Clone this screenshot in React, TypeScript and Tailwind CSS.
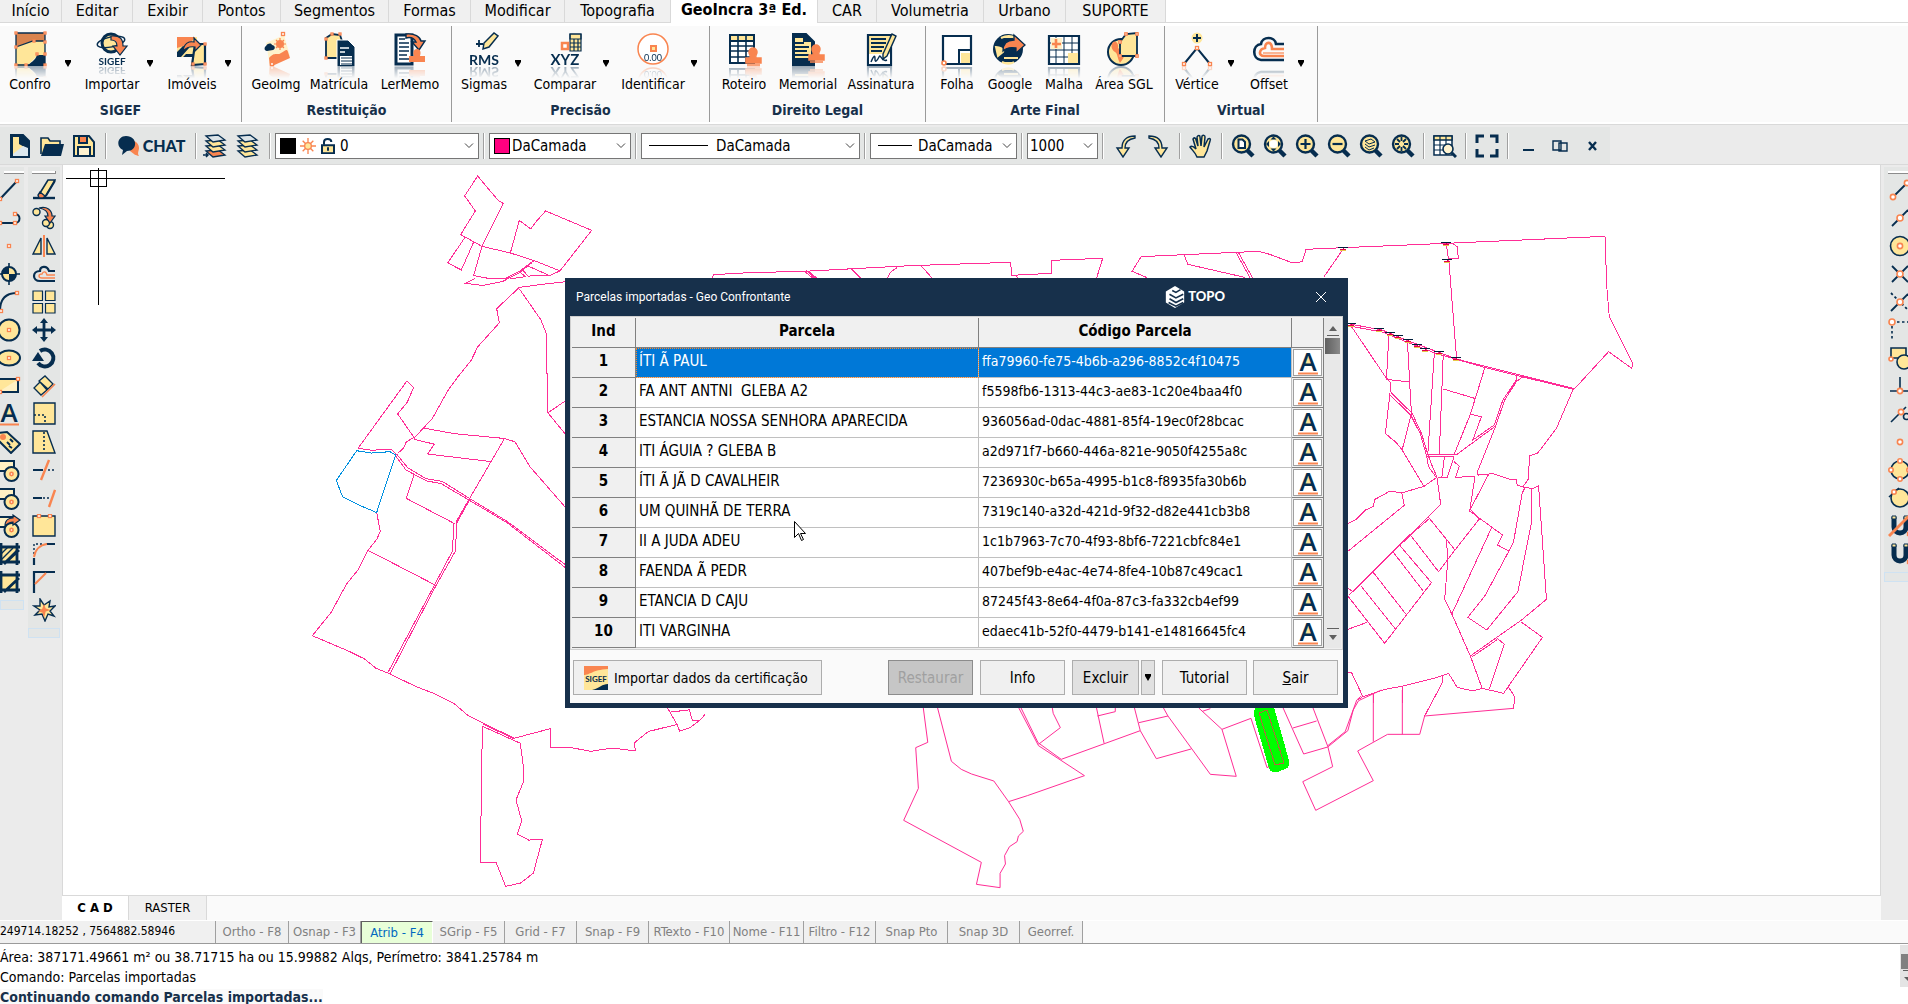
import { ReactNode } from "react";
import { clsx } from "clsx";

const NAVY = "#062d4f";
const SAND = "#ffe699";
const CORAL = "#f98550";

/**
 * ICON PARTS
 */
function Grip({ x, y, s = 3 }: { x: number; y: number; s?: number }) {
    return <rect x={x - s / 2} y={y - s / 2} width={s} height={s} fill="#fff" stroke={CORAL} strokeWidth={1.3} />
}

function Ring({ x, y, r = 2.6 }: { x: number; y: number; r?: number }) {
    return <circle cx={x} cy={y} r={r} fill="#fff" stroke={CORAL} strokeWidth={1.6} />
}

function Stamp() {
    return <path d="M24 13a4 4 0 0 0-4 4c0 3 2 3 1 6h-4v5h15v-5h-5c-1-3 1-3 1-6a4 4 0 0 0-4-4ZM18 30h13" fill={CORAL} stroke={CORAL} strokeWidth={1.5} />
}

function Letter({ x, y, size, children }: { x: number; y: number; size: number; children: string }) {
    return (
        <text x={x} y={y} fontSize={size} textAnchor="middle" fontWeight={700} fill={NAVY} stroke="none" fontFamily="Lato, sans-serif">
            {children}
        </text>
    )
}

function Icon({ children, box = 24, className }: { children: ReactNode; box?: number; className?: string }) {
    return (
        <svg viewBox={`0 0 ${box} ${box}`} fill="none" stroke={NAVY} strokeWidth={2} className={clsx('shrink-0', className)} aria-hidden="true">
            {children}
        </svg>
    )
}

/**
 * RIBBON ICONS, 36 x 36
 */
const ribbonIcons: Record<string, ReactNode> = {
    Confro: (
        <>
            <path d="M4 3h29v8L21 11 4 17Z" fill="#d9844f" stroke="none" />
            <path d="M4 17 21 11h12v15h-8L14 37H4Z" fill={SAND} stroke="none" />
            <path d="M33 25h-8c-2 6-6 7-10 11h18Z" fill={NAVY} stroke="none" />
            <path d="M4 3v32h29V3ZM4 17l17-6h12" strokeWidth={1.3} />
            <Grip x={4} y={3} s={2} /><Grip x={33} y={3} s={2} /><Grip x={4} y={17} s={2} /><Grip x={22} y={11} s={2} /><Grip x={33} y={12} s={2} />
            <Grip x={4} y={35} s={2} /><Grip x={33} y={35} s={2} /><Grip x={14} y={35} s={2} /><Grip x={25} y={24} s={2} /><Grip x={33} y={24} s={2} />
        </>
    ),
    Importar: (
        <>
            <circle cx={17} cy={13} r={9} fill={SAND} strokeWidth={3} />
            <ellipse cx={17} cy={12} rx={14} ry={5} transform="rotate(-12 17 12)" strokeWidth={1.5} />
            <path d="M17 6c9-1 12 3 12 10h4l-7 9-7-9h4c0-4-2-6-6-6Z" fill={CORAL} strokeWidth={1.2} />
            <Letter x={18} y={35} size={10}>SIGEF</Letter>
        </>
    ),
    "Imóveis": (
        <>
            <path d="M3 7h20v20H3Z" fill={SAND} stroke="none" />
            <path d="M3 7h18l-5 7-13 4Z" fill={CORAL} stroke="none" />
            <path d="M12 24h9v3H9ZM3 22l6-6 6 2-8 9H3Z" fill={NAVY} stroke="none" />
            <path d="M21 14h10v20l-13 1Z" fill={SAND} strokeWidth={2.2} />
            <path d="M9 21c1-8 6-10 11-9V8l7 7-6 6v-4c-5-1-8 0-12 4Z" fill={CORAL} strokeWidth={1.2} />
            <Grip x={31} y={14} s={2} /><Grip x={31} y={34} s={2} /><Grip x={19} y={34} s={2} />
        </>
    ),
    GeoImg: (
        <>
            <path d="M8 13 26 5l6 21-20 10Z" fill="#fff2cb" stroke="none" />
            <path d="M11 28c6-7 8-2 12-5 4-2 6-5 7-1l2 6-20 9Z" fill={CORAL} stroke="none" />
            <path d="M8 16c2-3 5-3 6-1 3 0 4 4 1 5l-6 1c-3 0-3-4-1-5Z" fill={NAVY} stroke="none" />
            <circle cx={22} cy={14} r={4} fill={CORAL} stroke="none" />
            <path d="M22 8v12M16 14h12M18 10l8 8M26 10l-8 8" stroke={CORAL} strokeWidth={1.2} />
            <Grip x={25} y={4} /><Grip x={14} y={34} />
        </>
    ),
    "Matrícula": (
        <>
            <path d="M5 28V8l6-4 8 1 2 6v17Z" fill={SAND} strokeWidth={1.8} />
            <Grip x={5} y={28} s={2} /><Grip x={5} y={9} s={2} /><Grip x={11} y={4} s={2} /><Grip x={19} y={4} s={2} />
            <path d="M16 10h11l7 7v20H16Z" fill={NAVY} stroke="#fff" strokeWidth={1} />
            <path d="M19 18h9M19 22h5" stroke="#fff" strokeWidth={1.5} />
            <path d="M19 26h12v9H19Z" fill="#fff" stroke="none" />
            <path d="M20 28h11M20 31h11M20 34h11" stroke={NAVY} strokeWidth={1} />
        </>
    ),
    LerMemo: (
        <>
            <path d="M4 5h16v29H4Z" fill="#fff" strokeWidth={3} />
            <path d="M7 9h6M7 13h10M7 17h10M7 21h10M7 25h8M7 29h10" strokeWidth={1.6} />
            <path d="M14 4c9-1 14 3 15 7h4l-6 9-7-8h4c-2-4-6-5-10-4Z" fill={CORAL} strokeWidth={1.4} />
            <path d="M25 19c4 0 4 4 3 7h5v6H17v-6h5c-1-3-1-7 3-7Z" fill={CORAL} stroke="none" />
        </>
    ),
    Sigmas: (
        <>
            <path d="m17 19 1-6L28 3l4 3-9 11Z" fill={SAND} strokeWidth={1.5} />
            <path d="M10 14h7M13 10v7" strokeWidth={1.8} />
            <Letter x={18} y={35} size={14}>RMS</Letter>
        </>
    ),
    Comparar: (
        <>
            <path d="M23 4h11v17H23Z" fill={SAND} stroke={NAVY} strokeWidth={1.2} />
            <path d="M23 4h11v5H23ZM23 13h11M23 17h11M27 9v12M31 9v12" strokeWidth={1.2} />
            <rect x={15} y={13} width={6} height={6} fill="#fff" stroke={CORAL} strokeWidth={2.5} />
            <Letter x={18} y={35} size={15}>XYZ</Letter>
        </>
    ),
    Identificar: (
        <>
            <circle cx={18} cy={19} r={15} stroke={CORAL} strokeWidth={1.5} fill="#fff" />
            <rect x={16} y={16} width={5} height={5} fill={SAND} stroke={CORAL} />
            <text x={18} y={31} fontSize={9} textAnchor="middle" fill={NAVY} stroke="none" fontFamily="Lato, sans-serif">0.00</text>
        </>
    ),
    Roteiro: (
        <>
            <path d="M4 5h24v28H4Z" fill="#fff" />
            <path d="M4 5h24v6H4Z" fill={SAND} />
            <path d="M4 16h24M4 21h24M4 27h24M12 5v28M20 5v28" strokeWidth={1.6} />
            <g transform="translate(3 5)"><Stamp /></g>
        </>
    ),
    Memorial: (
        <>
            <path d="M3 4h13l8 8v23H3Z" fill={NAVY} />
            <path d="M5 8h8v4h8v18H5Z" fill={SAND} stroke="none" />
            <path d="M4 13h10M4 17h15M4 21h13M4 25h15M4 29h15" strokeWidth={2} />
            <g transform="translate(2 2)"><Stamp /></g>
        </>
    ),
    Assinatura: (
        <>
            <path d="M5 5h23v30H5Z" fill={SAND} strokeWidth={2.2} />
            <path d="M6 24h21v10H6Z" fill="#fff" stroke="none" />
            <path d="M8 9h15M8 13h15M8 17h13M8 21h11" strokeWidth={1.8} />
            <path d="M8 32c3-7 4-7 4-3s2 2 4-2 2 6 8 3" strokeWidth={1.4} />
            <path d="m20 24 9-20 4 2-9 20-4 3Z" fill={SAND} strokeWidth={1.4} />
        </>
    ),
    Folha: (
        <>
            <path d="M4 6h28v28H4Z" fill="#fff" strokeWidth={2.2} />
            <path d="M20 20h12v14H20Z" fill="#fff" />
            <path d="M22 23h9v10h-9Z" fill={SAND} stroke="none" />
            <Ring x={5} y={33} r={2} />
        </>
    ),
    Google: (
        <>
            <circle cx={16} cy={19} r={15} fill={NAVY} stroke="none" />
            <path d="M4 17c4 0 8 2 7 5l-5 4ZM12 28h14M9 8c4-2 10-3 14 0M10 32c4 2 9 2 12 0" stroke={SAND} fill={SAND} strokeWidth={2} />
            <path d="M11 21c0-9 5-11 11-11V5l11 10-9 8v-5c-5-1-9-1-13 3Z" fill={CORAL} strokeWidth={1.3} />
        </>
    ),
    Malha: (
        <>
            <path d="M3 6h30v28H3Z" fill="#fff" strokeWidth={2.2} />
            <path d="M3 13h30M3 20h30M3 27h30M10 6v28M18 6v28M26 6v28" strokeWidth={1} />
            <path d="M5 8h11v11H5Z" fill="#fff2cb" stroke="none" />
            <path d="M22 23h10v10H22Z" fill={SAND} stroke="none" />
            <path d="M10 9v9M6 14h9" stroke={CORAL} strokeWidth={2.6} />
        </>
    ),
    "Área SGL": (
        <>
            <circle cx={15} cy={22} r={13} fill={SAND} strokeWidth={2} />
            <path d="M7 12c3-2 6 2 5 6l6 5c1 4-2 7-4 10-3-5-2-9-5-11s-5-6-2-10Z" fill={CORAL} stroke="none" />
            <path d="M14 12 20 4l11-1v23H14Z" fill={SAND} strokeWidth={1.8} />
            <Grip x={14} y={12} s={2.4} /><Grip x={20} y={4} s={2.4} /><Grip x={31} y={4} s={2.4} /><Grip x={31} y={26} s={2.4} /><Grip x={14} y={26} s={2.4} />
        </>
    ),
    "Vértice": (
        <>
            <circle cx={18} cy={8} r={5.5} fill={SAND} stroke="none" />
            <path d="M18 4v8M14 8h8" strokeWidth={2} />
            <path d="m5 34 13-16 13 16" strokeWidth={2} />
            <Grip x={18} y={18} /><Grip x={5} y={34} /><Grip x={31} y={34} />
        </>
    ),
    Offset: (
        <>
            <path d="M33 14H25c-1-8-14-8-15 0C1 15 1 29 10 30h23" strokeWidth={2.6} />
            <path d="M33 19H21c0-8-7-8-7-1-6 1-7 8-1 8h20" stroke={CORAL} strokeWidth={2.6} />
            <path d="M33 23H12" stroke={CORAL} strokeWidth={1.2} />
        </>
    ),
}

/**
 * DRAWING TOOL ICONS, 24 x 24
 */
const block = (
    <>
        <path d="M2 3h15v10H2Z" fill="#fff1c4" />
        <circle cx={14.5} cy={16} r={7} fill={SAND} />
        <Ring x={14.5} y={16} r={1.6} />
    </>
)
const frame = <path d="M1 5h22M1 20h22M4 1v22M20 1v22M7 22 22 8" strokeWidth={2.8} />

const drawIcons: Record<string, ReactNode> = {
    Linha: <><path d="M4 20 20 3" /><Grip x={3} y={21} /><Grip x={20} y={3} /></>,
    Polilinha: <><path d="M1 17h17c6 0 6-9 0-9" /><Grip x={3} y={17} /><Grip x={18} y={17} /><Grip x={18} y={8} /></>,
    Ponto: <Grip x={12} y={12} />,
    Base: <><path d="M12 1v22M1 12h22" strokeWidth={1.6} /><circle cx={12} cy={12} r={7} fill={SAND} /><path d="M12 12V5a7 7 0 0 0-7 7ZM12 12v7a7 7 0 0 0 7-7Z" fill={NAVY} stroke="none" /></>,
    Arco: <><path d="M3 21C3 10 8 3 20 3" /><Grip x={20} y={3} /><Grip x={4} y={21} /></>,
    "Círculo": <><circle cx={12} cy={12} r={10.5} fill={SAND} /><Grip x={12} y={12} /></>,
    Elipse: <><ellipse cx={12} cy={12} rx={11} ry={7.5} fill={SAND} /><Grip x={12} y={12} /></>,
    "Retângulo": <><path d="M2 5h19v13H2Z" fill="#fff1c4" /><path d="M3 6h17L3 17Z" fill={SAND} stroke="none" /><Grip x={21} y={5} /><Grip x={3} y={18} /></>,
    Texto: (
        <>
            <path d="M12 4 8 15h8Z" fill={SAND} stroke="none" />
            <text x={12} y={20} fontSize={26} textAnchor="middle" fontWeight={600} fill={NAVY} stroke="none" fontFamily="Open Sans, sans-serif">A</text>
            <path d="M2 22.5h20" stroke={CORAL} />
        </>
    ),
    Etiqueta: <><path d="m1 3 9-1 13 12-9 9L1 10Z" fill={SAND} /><circle cx={6} cy={7} r={2} fill={CORAL} stroke={CORAL} /><path d="m10 12 3 3M13 9l3 3M12 16l3 2" /></>,
    Bloco: block,
    "Novo bloco": block,
    "Inserir bloco": <>{block}<path d="M8 12C8 5 13 4 16 4V1l7 5-7 5V8c-3 0-5 1-8 4Z" fill={CORAL} strokeWidth={1.2} /></>,
    Hachura: <><path d="M4 5h16v15H4Z" fill={SAND} stroke="none" /><path d="m4 12 7-7M4 18 16 6M8 20 20 8" strokeWidth={1.4} />{frame}</>,
    "Área": <><path d="M4 5h16v15H4Z" fill={SAND} stroke="none" />{frame}</>,
}

const editIcons: Record<string, ReactNode> = {
    Apagar: <><path d="M1 20h22" strokeWidth={2.4} /><path d="m8 15 8-13h7L13 19H7Z" fill={SAND} strokeWidth={1.6} /><path d="m14 18 9-15" strokeWidth={1.6} /><path d="m8 14 5 4-2 2H7l-1-3Z" fill={CORAL} strokeWidth={1.4} /></>,
    Copiar: <><circle cx={4.5} cy={6} r={3.5} fill={SAND} strokeWidth={1.4} /><circle cx={18} cy={19} r={3.5} fill={SAND} strokeWidth={1.4} /><circle cx={14} cy={17} r={3.5} fill={SAND} strokeWidth={1.4} /><path d="M7 2c8-2 13 2 13 8h3l-5 7-5-7h3c0-4-3-7-9-8Z" fill={CORAL} strokeWidth={1.2} /></>,
    Espelhar: <><path d="M9 4v16H1ZM15 4v16h8Z" fill={SAND} strokeWidth={1.4} /><path d="M12 1v22" stroke={CORAL} strokeWidth={2} /></>,
    Paralela: <><path d="M23 9h-6c-2-6-9-5-9 0-8 0-8 10 0 10h15" strokeWidth={2.2} /><path d="M23 13h-8c-1-4-4-4-5-1-4 0-4 4 0 4h13" stroke={CORAL} strokeWidth={1.4} /></>,
    Matriz: <path d="M1 1h9.5v9.5H1ZM13.5 1H23v9.5h-9.5ZM1 13.5h9.5V23H1ZM13.5 13.5H23V23h-9.5Z" fill={SAND} strokeWidth={1.2} />,
    Mover: <><path d="M12 3v18M3 12h18" strokeWidth={2.8} /><path d="m12 0 4 5H8ZM12 24l4-5H8ZM0 12l5-4v8ZM24 12l-5-4v8Z" fill={NAVY} stroke="none" /></>,
    Rotacionar: <><path d="M8 5a8.500 8.500 0 1 1-2 12" strokeWidth={4} /><path d="m6 6 6 9H0Z" fill={NAVY} stroke="none" /></>,
    Alinhar: <><path d="m7 7 6-5 8 8-5 5ZM2 14l6-6 7 8-6 5Z" fill={SAND} strokeWidth={1.3} /><path d="M10 23 23 10" stroke={CORAL} strokeWidth={1.6} /></>,
    Escala: <><path d="M2 1h21v21H2Z" fill={SAND} strokeWidth={1.4} /><path d="M2 13h11v9" strokeWidth={1.6} strokeDasharray="2 2" /></>,
    Esticar: <><path d="M1 1h14l8 22H1Z" fill={SAND} strokeWidth={1.4} /><path d="M12 2v20" strokeWidth={1.6} strokeDasharray="2 2" /></>,
    Cortar: <><path d="M1 12h10" /><path d="M12 12h12" strokeDasharray="2 2" strokeWidth={1.4} /><path d="m9 22 8-20" stroke={CORAL} strokeWidth={2.4} /></>,
    Estender: <><path d="M1 12h9" /><path d="M11 12h7" strokeDasharray="2 2" strokeWidth={1.4} /><path d="m17 21 6-17" stroke={CORAL} strokeWidth={2.4} /></>,
    Quebrar: <><path d="M1 2h22v20H1Z" fill={SAND} strokeWidth={1.4} /><Grip x={7} y={2} /><Grip x={18} y={2} /></>,
    Concordar: <><path d="M2 23v-7M23 2h-9" strokeWidth={2.2} /><path d="M2 12V2h9" strokeWidth={1.4} strokeDasharray="2 2" /><path d="M2 15C3 8 8 3 15 2" stroke={CORAL} /></>,
    Chanfrar: <><path d="M2 23V2h21" strokeWidth={2.2} /><path d="M3 14 14 3" stroke={CORAL} /></>,
    Explodir: <><path d="m8 1 4 6 6-4-1 6 6-1-5 5 4 5-6-2-3 7-3-7-7 1 5-5-6-4h6Z" fill={SAND} strokeWidth={1.4} /><path d="m12 8 1 3 3 1-3 1-1 4-1-3-3-1 3-2Z" fill={CORAL} stroke={CORAL} strokeWidth={1.5} /></>,
}

const magnet = <><path d="M6 3v10a6 6 0 0 0 12 0V3" strokeWidth={5} /><path d="M4 2h4v3H4ZM16 2h4v3h-4Z" fill={SAND} strokeWidth={1} /><Grip x={21} y={20} /></>
const snapIcons: Record<string, ReactNode> = {
    Extremidade: <><path d="M5 19 19 5" strokeWidth={1.8} /><Ring x={5} y={19} /><Ring x={19} y={5} /></>,
    Meio: <><path d="M4 20 20 4" strokeWidth={1.8} /><Ring x={12} y={12} r={3} /></>,
    Centro: <><circle cx={12} cy={12} r={9.5} fill={SAND} strokeWidth={1.6} /><Ring x={12} y={12} /></>,
    "Interseção": <><path d="m4 4 16 16M4 20 20 4" strokeWidth={1.8} /><Ring x={12} y={12} r={3} /></>,
    Aparente: <><path d="M3 21 20 4" strokeWidth={1.8} /><path d="m3 3 18 18" strokeDasharray="2.5 2.5" strokeWidth={1.8} /><Ring x={12} y={12} r={3} /></>,
    "Extensão": <><path d="M4 8v15M9 4h14" strokeDasharray="2.5 2.5" strokeWidth={1.6} /><Ring x={4} y={4} r={3} /></>,
    "Inserção": <><path d="M3 2h15v10H3Z" fill={SAND} strokeWidth={1.6} /><circle cx={16} cy={16} r={7} fill={SAND} strokeWidth={1.6} /><Ring x={3} y={13} r={2} /></>,
    Perpendicular: <><path d="M2 17h22M12 3v14" strokeWidth={1.6} /><Ring x={12} y={17} /></>,
    Tangente: <><path d="M3 20 18 5" strokeWidth={1.6} /><circle cx={18.5} cy={14.5} r={3} strokeWidth={1.6} /><Ring x={13} y={10} /></>,
    "Nó": <Ring x={12} y={12} />,
    Quadrante: <><circle cx={12} cy={12} r={9} fill={SAND} strokeWidth={1.6} /><Ring x={12} y={3} r={2.2} /><Ring x={12} y={21} r={2.2} /><Ring x={3} y={12} r={2.2} /><Ring x={21} y={12} r={2.2} /></>,
    "Próximo": <><circle cx={12} cy={12} r={9} fill={SAND} strokeWidth={1.6} /><path d="m1 11 10-9" strokeWidth={1.6} /><Ring x={6} y={6} r={2.2} /></>,
    "Desligar snap": <>{magnet}<path d="M1 22 22 1" stroke={CORAL} strokeWidth={3} /></>,
    "Ligar snap": magnet,
}

/**
 * RIBBON
 */
const menuTabs = [
    { label: "Início", width: "w-[62px]" },
    { label: "Editar", width: "w-[71px]" },
    { label: "Exibir", width: "w-[70px]" },
    { label: "Pontos", width: "w-[78px]" },
    { label: "Segmentos", width: "w-[108px]" },
    { label: "Formas", width: "w-[82px]" },
    { label: "Modificar", width: "w-[94px]" },
    { label: "Topografia", width: "w-[106px]" },
    { label: "GeoIncra 3ª Ed.", width: "w-[147px]", active: true },
    { label: "CAR", width: "w-[59px]" },
    { label: "Volumetria", width: "w-[107px]" },
    { label: "Urbano", width: "w-[82px]" },
    { label: "SUPORTE", width: "w-[100px]" },
]

type RibbonItem = { label: string; width: string; menu?: boolean }

const ribbonGroups: { title: string; width: string; items: RibbonItem[] }[] = [
    {
        title: "SIGEF", width: "w-[241px] gap-1.5",
        items: [
            { label: "Confro", width: "w-[60px]", menu: true },
            { label: "Importar", width: "w-[60px]", menu: true },
            { label: "Imóveis", width: "w-[56px]", menu: true },
        ],
    },
    {
        title: "Restituição", width: "w-[209px] pl-1",
        items: [
            { label: "GeoImg", width: "w-[60px]" },
            { label: "Matrícula", width: "w-[66px]" },
            { label: "LerMemo", width: "w-[76px]" },
        ],
    },
    {
        title: "Precisão", width: "w-[257px] gap-1.5 pl-1.5",
        items: [
            { label: "Sigmas", width: "w-[52px]", menu: true },
            { label: "Comparar", width: "w-[66px]", menu: true },
            { label: "Identificar", width: "w-[66px]", menu: true },
        ],
    },
    {
        title: "Direito Legal", width: "w-[215px] pl-1",
        items: [
            { label: "Roteiro", width: "w-[60px]" },
            { label: "Memorial", width: "w-[68px]" },
            { label: "Assinatura", width: "w-[78px]" },
        ],
    },
    {
        title: "Arte Final", width: "w-[238px] pl-1",
        items: [
            { label: "Folha", width: "w-[54px]" },
            { label: "Google", width: "w-[52px]" },
            { label: "Malha", width: "w-[56px]" },
            { label: "Área SGL", width: "w-[64px]" },
        ],
    },
    {
        title: "Virtual", width: "w-[152px] gap-1.5 pl-1.5",
        items: [
            { label: "Vértice", width: "w-[52px]", menu: true },
            { label: "Offset", width: "w-[48px]", menu: true },
        ],
    },
]

function MenuTabs() {
    return (
        <nav className="flex h-[23px] border-b border-[#d9d9d9]">
            {menuTabs.map(({ label, width, active }) => (
                <button
                    key={label}
                    className={clsx(
                        'shrink-0 border-r border-[#d9d9d9] text-base whitespace-nowrap',
                        width,
                        active ? '-mb-px h-[23px] bg-white pb-1 leading-4 font-bold' : 'h-[22px] bg-[#f0f0f0] leading-5'
                    )}
                >
                    {label}
                </button>
            ))}
        </nav>
    )
}

function Ribbon() {
    return (
        <section className="mt-[3px] mb-[2px] flex h-[96px] bg-[#fafafa]">
            {ribbonGroups.map(({ title, width, items }) => (
                <div key={title} className="flex shrink-0 flex-col border-r border-[#9a9a9a]">
                    <div className={clsx('flex h-[68px]', width)}>
                        {items.map((item) => (
                            <div key={item.label} className="flex shrink-0">
                                <button className={clsx('flex flex-col items-center pt-1', item.width)}>
                                    <Icon box={36} className="size-9 [-webkit-box-reflect:below_0_linear-gradient(transparent_66%,rgb(0_0_0/0.4))]">
                                        {ribbonIcons[item.label]}
                                    </Icon>
                                    <span className="mt-2.5 text-sm leading-4 whitespace-nowrap">{item.label}</span>
                                </button>
                                {item.menu && (
                                    <button className="flex w-4 justify-center pt-[34px]" aria-label={`Opções de ${item.label}`}>
                                        <svg viewBox="0 0 6 7" className="h-[7px] w-1.5"><path d="M0 0h6v2L3 7 0 2Z" /></svg>
                                    </button>
                                )}
                            </div>
                        ))}
                    </div>
                    <h2 className="pt-2 text-center text-sm leading-4 font-bold text-[#17304b]">{title}</h2>
                </div>
            ))}
        </section>
    )
}

/**
 * TOOLBAR
 */
function Separator() {
    return <span className="h-[26px] w-0.5 shrink-0 border-l border-[#a0a0a0] bg-white" />
}

function Combo({ label, value, children, className }: { label: string; value: string; children?: ReactNode; className: string }) {
    return (
        <label className={clsx('flex h-[26px] shrink-0 items-center border border-[#767676] bg-white', className)}>
            {children}
            <select aria-label={label} className="min-w-0 flex-1 appearance-none text-[15px] leading-5 outline-none">
                <option>{value}</option>
            </select>
            <svg viewBox="0 0 10 6" className="mr-1 h-1.5 w-2.5 shrink-0" fill="none" stroke="#444"><path d="m1 .5 4 4 4-4" /></svg>
        </label>
    )
}

function Tool({ label, children, className }: { label: string; children: ReactNode; className?: string }) {
    return (
        <button aria-label={label} className={clsx('shrink-0', className)}>
            <Icon className="size-6">{children}</Icon>
        </button>
    )
}

const lens = <><path d="m15 15 7 7" strokeWidth={4.5} /><circle cx={10.5} cy={10} r={8.5} fill={SAND} strokeWidth={2.4} /></>
const zoomIcons: Record<string, ReactNode> = {
    "Zoom página": <>{lens}<path d="M7.5 5.500h4l2.500 2.500v6H7.500Z" fill="#fff" /></>,
    "Zoom extensão": <>{lens}<circle cx={10.5} cy={10} r={4} fill="#fff" stroke="none" /><path d="m10.5 2.500 3 3h-6ZM10.500 17.500l3-3h-6ZM3 10l3-3v6ZM18 10l-3-3v6Z" fill={NAVY} stroke="none" /></>,
    "Mais zoom": <>{lens}<path d="M5.5 10h10M10.500 5v10" strokeWidth={2.2} /></>,
    "Menos zoom": <>{lens}<path d="M5.5 10h10" strokeWidth={2.2} /></>,
    "Zoom camada": <>{lens}<path d="m6 7 6-2 4 3-6 2ZM6 10l4 3 6-2M6 13l4 3 5-2" strokeWidth={1} /></>,
    "Zoom centro": <>{lens}<path d="m6 5 3 3M15 5l-3 3M6 15l3-3M15 15l-3-3M10.5 3v4M10.500 13v4M4 10h4M13 10h4" strokeWidth={1.8} /></>,
}

function Layers({ accent }: { accent?: boolean }) {
    return (
        <>
            {[16, 11, 6, 1].map((y) => (
                <path key={y} d={`M3 ${y + 1}l12-1 7 5-12 2Z`} fill={accent && y === 16 ? CORAL : y === 1 ? '#dce4e8' : SAND} strokeWidth={1.3} />
            ))}
            {accent && <path d="M0 21h5M3 19l2 2-2 2" strokeWidth={1.5} />}
        </>
    )
}

function Toolbar() {
    return (
        <section className="border-y border-[#d9d9d9] bg-[#ebebeb] pt-0.5">
            <div className="flex h-[37px] w-[1610px] items-center bg-[#e4e6e5]">
                <div className="flex w-[105px] shrink-0 items-center gap-2 pl-2">
                    <Tool label="Novo"><path d="M3 1h12l6 6v16H3Z" fill={NAVY} /><path d="M5 3h6v7l9 5v7H5Z" fill={SAND} stroke="none" /><path d="m5 20 10-8 5 2v8H5Z" fill="#dbe8ef" stroke="none" /></Tool>
                    <Tool label="Abrir"><path d="M1 20V4h7l2 3h10v4" fill={SAND} strokeWidth={1.6} /><path d="m5 10h19l-3 12H1Z" fill={NAVY} stroke="none" /></Tool>
                    <Tool label="Salvar"><path d="M2 2h15l5 6v14H2Z" fill={SAND} /><path d="M7 2h8v7H7Z" fill={CORAL} /><path d="M6 13h12v9H6Z" fill="#fff3d0" /></Tool>
                </div>
                <Separator />
                <button className="flex w-[88px] shrink-0 items-center justify-center font-[Lato,sans-serif] text-base font-black text-[#062d4f]">
                    <Icon className="mr-0.5 size-6">
                        <path d="M13 17c5 4 5 4 9 5-2-3 0-5 0-8s-2-6-5-7Z" fill={CORAL} stroke="none" />
                        <path d="M9 2c12 0 12 15 1 15l-5 4 1-5C-2 12 1 2 9 2Z" fill={NAVY} stroke="none" />
                    </Icon>
                    CHAT
                </button>
                <Separator />
                <div className="flex w-[72px] shrink-0 gap-2 pl-1.5">
                    <Tool label="Camadas"><Layers accent /></Tool>
                    <Tool label="Gerenciar camadas"><Layers /></Tool>
                </div>
                <Separator />
                <Combo label="Camada" value="0" className="mx-1 w-[204px] pl-1">
                    <span className="mr-1 size-4 bg-black" />
                    <Icon className="mr-1 size-4"><path d="M12 0v24M0 12h24M4 4l16 16M20 4 4 20" stroke={CORAL} /><circle cx={12} cy={12} r={5} fill={SAND} stroke={CORAL} /></Icon>
                    <Icon className="mr-1 h-4 w-4"><path d="M3 11h18v12H3Z" fill={SAND} strokeWidth={3} /><path d="M6 10V6c0-6 11-6 11 0M12 14v5" strokeWidth={3} /></Icon>
                </Combo>
                <Separator />
                <Combo label="Cor" value="DaCamada" className="mx-1 w-[142px] pl-1">
                    <span className="mr-0.5 size-4 shrink-0 border border-black bg-[#ff0080]" />
                </Combo>
                <Separator />
                <Combo label="Tipo de linha" value="DaCamada" className="mx-1 w-[219px] pl-[7px]">
                    <span className="mr-2 w-[59px] shrink-0 border-t border-black" />
                </Combo>
                <Separator />
                <Combo label="Espessura" value="DaCamada" className="mx-1 w-[147px] pl-[7px]">
                    <span className="mr-1.5 w-[34px] shrink-0 border-t border-black" />
                </Combo>
                <Separator />
                <Combo label="Escala" value="1000" className="mx-1 w-[71px] pl-0.5" />
                <Separator />
                <div className="flex w-[75px] shrink-0 gap-2 pl-2.5">
                    <Tool label="Desfazer"><path d="M21 2C13 2 8 6 8 14H3l6 9 6-9h-4c0-6 4-9 10-10Z" fill={SAND} strokeWidth={1.4} /></Tool>
                    <Tool label="Refazer"><path d="M3 2c8 0 13 4 13 12h5l-6 9-6-9h4c0-6-4-9-10-10Z" fill={SAND} strokeWidth={1.4} /></Tool>
                </div>
                <Separator />
                <Tool label="Mover vista" className="mx-2"><path d="M8 23c-2-5-5-7-7-10 2-2 4 0 6 2L4 5c1-2 3-1 3 1l2 6-1-9c1-2 3-2 3 0l1 9 1-10c1-1 3-1 3 1l-1 10 4-8c2-1 3 0 2 2l-3 10-3 6Z" fill={SAND} strokeWidth={1.5} /></Tool>
                <Separator />
                <div className="flex w-[200px] shrink-0 gap-2 pl-2">
                    {Object.entries(zoomIcons).map(([label, icon]) => <Tool key={label} label={label}>{icon}</Tool>)}
                </div>
                <Separator />
                <Tool label="Localizar na tabela" className="mx-2"><path d="M1 2h18v19H1Z" fill="#fff" strokeWidth={1.5} /><path d="M1 2h18v4H1Z" fill={SAND} strokeWidth={1.5} /><path d="M1 11h18M1 16h18M7 2v19M13 2v19" strokeWidth={1.2} /><path d="m19 19 4 4" strokeWidth={3} /><circle cx={15} cy={15} r={5} fill="#fff3d0" strokeWidth={1.6} /></Tool>
                <Separator />
                <Tool label="Tela cheia" className="mx-2"><path d="M2 9V2h7M15 2h7v7M22 15v7h-7M9 22H2v-7" strokeWidth={3} /></Tool>
                <Separator />
                <div className="flex gap-2 pl-2">
                    <Tool label="Minimizar"><path d="M6 16h11" strokeWidth={2} /></Tool>
                    <Tool label="Restaurar janela"><path d="M4 7h8v9H4ZM10 9h8v8h-8Z" strokeWidth={1.4} /></Tool>
                    <Tool label="Fechar desenho"><path d="m8 8 7 8M15 8l-7 8" strokeWidth={2.4} /></Tool>
                </div>
            </div>
        </section>
    )
}

function ToolColumn({ icons, className, shift }: { icons: Record<string, ReactNode>; className?: string; shift: string }) {
    return (
        <div className={clsx('flex shrink-0 flex-col self-start overflow-hidden bg-[#e4e6e5]', className)}>
            <span className="mt-1 mb-0.5 ml-1 h-[3px] w-[24px] border-r border-b border-[#8c8c8c] bg-white" />
            {Object.entries(icons).map(([label, icon]) => (
                <button key={label} aria-label={label} className={clsx('flex h-7 w-6 items-center', shift)}>
                    <Icon className="size-6">{icon}</Icon>
                </button>
            ))}
            <span className="mt-1 h-2.5 border border-[#cfe2f2]" />
        </div>
    )
}

/**
 * MAP
 */
const sheets = [
    {
        grid: "translate(280 160) scale(.33333 .47194)",
        lines: "M593 34 655 86 670 92 606 183 542 158 586 108 554 76ZM555 164 503 218 544 233 581 174M606 183 581 245M606 183 691 197 718 128 752 146 769 130 797 108 935 149 840 235 812 244M691 197 762 213 840 235M581 245 627 251 677 251 720 235 762 213M585 251 556 261 608 266 669 257 720 238 755 218M745 225 806 244 745 246 727 233M720 238 737 247 690 252M812 244H800M855 258 780 264 718 270 650 315 658 345 593 396 574 424 533 460 505 487 456 549 430 568 402 590M718 273 782 338 799 368 803 535 855 580M805 535 855 511M430 568 525 580 672 590 705 597 750 650 855 735M672 592 568 718 527 768M234 611 381 468 401 482 382 513 353 538 402 588 379 597 371 610 353 622M402 592 463 602 443 623 632 639M234 611 275 615 333 613 352 625 383 652 437 675 487 681 568 717 680 765 855 857M347 627 378 657 410 669 441 680 484 686 568 721 680 768 855 863M402 668 379 717 525 771M522 771 517 829 464 900 323 1087M531 768 526 829 467 903 330 1089M568 721 531 768M290 747 301 787 290 804 264 827 464 900M264 827 235 868 200 898 154 958 97 1008 207 1041 253 1057 288 1077 323 1087 409 1116 464 1131 521 1151 564 1177 652 1208 704 1225 811 1205 811 1245 873 1245 932 1253 997 1246 1066 1252 1063 1235 1105 1211 1191 1196 1162 1160M608 1200 721 1236 730 1285 730 1318 708 1356 725 1400 712 1428 746 1441 787 1440 760 1511 722 1532 677 1539 648 1488 602 1488 604 1300ZM608 1195 704 1227M1170 1170 1228 1165 1237 1187 1260 1187M1191 1196 1199 1210 1230 1203 1260 1187 1275 1175",
    },
    {
        grid: "translate(660 230) scale(.33333 .33333)",
        lines: "M157 144 160 134 268 128 432 124 750 107 1052 97 1055 136 1174 130 1174 91 1328 85 1310 144M434 124 458 144M439 122 464 144M445 124 470 144M575 117 602 144M712 112 690 128 682 144M783 107 816 144M1070 138 1073 144",
    },
    {
        grid: "translate(1100 220) scale(.35714 .33333)",
        lines: "M132 173 90 154 115 110 235 104 445 94 475 103 540 129 566 125 577 88 681 83 970 70 1414 49 1419 200 1426 290 1491 430 1489 445 1424 395 1329 506 1187 468 998 417 861 362 790 330 694 311M235 104 246 133 405 172M381 98 420 173M388 98 427 173M681 87 626 172M970 75 977 125 998 410M985 70 1001 80 1003 115 978 117M694 317 790 336 861 367 940 400 1080 443 1325 508M1325 508 1278 625 1225 700 1203 707 1199 778 1184 801M703 318 799 470 812 486 815 518M809 345 802 478 866 486M861 365 867 486 872 580 846 690 830 668 815 655 799 640 812 520M815 518 874 580 900 640 917 700 929 735 943 770M812 525 870 585 897 642 914 705 920 740 942 773M846 690 907 799 942 773M936 400 918 702M961 407 950 704M918 702 997 705 1105 620M914 708 990 710M1077 445 1037 583 991 705M961 507 1049 535M1037 583 1068 590 1044 660 1105 614M1187 468 1166 485 1133 540 1108 618 1055 760M1166 468V480L1128 540 1105 612M957 772 965 707M947 772H972L991 712M991 725 1006 738 996 772 1050 769M1055 760 1060 765 1100 761 1148 778 1166 780 1168 795 1184 801 1213 806 1228 797 1250 1138 1178 1202 1110 1253 1037 1308M1050 769 1035 873 1127 945 1113 975 1145 993 1158 965 1182 820 1190 803M1088 763 1037 868 1062 897 994 990M1208 806V908L1170 1115 1083 1230 1030 1192 1078 1127 1145 993M1097 922 985 1182M943 770 954 853 919 890 697 1126M925 893 870 944 709 1115 694 1105M920 892 970 958 994 990 948 1055 867 942M970 958 974 1020 965 1138 985 1182 1037 1308 1070 1405M907 799 850 817 809 815 770 838 765 860 743 870 715 900 694 911M845 818 852 856 694 994M840 977 928 1088 797 1270 694 1128M820 995 905 1113M765 1057 857 1183M730 1097 827 1227M748 1207 694 1228M1110 1253 1132 1273 1090 1408M1178 1205 1239 1252 1143 1400 1130 1420 1070 1405 1044 1413 1000 1402 976 1360 945 1372 850 1398 798 1408 736 1430 722 1440M1040 1312 1112 1259M694 1357H704L736 1430M765 1420V1450M847 1400V1450M960 1368V1385L908 1490M1158 1466 1161 1430 1143 1400",
    },
    {
        grid: "translate(880 690) scale(.44643 .33333)",
        lines: "M97 54 107 157 80 173 86 295 53 391 227 517 216 583 269 593 269 550 281 522 279 497 290 470 307 455 310 438 321 424 313 388 288 335 255 273 205 252 182 238 160 214 129 54M288 335 330 317 458 257 355 167 311 54M316 54 354 158 406 208M386 54 388 70 404 113 355 163M406 208 583 122 570 54M485 54 502 160M487 78 527 65V54M580 98 645 78 635 54M645 78 740 253 798 259 766 118 714 54M583 122 619 206 697 177M766 118 831 85 867 233 872 230M722 64 740 56M903 54 949 192 1003 171 1048 122 1060 60 1072 32 1123 0M1003 167 1042 125 1068 30 1078 18M970 54 1003 169 1014 230 947 275 976 361 1105 272 1070 183 1137 133 1209 133 1220 78 1419 55M925 114 978 93M1105 10V155M1170 0V133",
    },
]

const landmarks = [
    [1343, 247], [1446, 242], [1447, 259], [1351, 323], [1379, 328], [1390, 332], [1398, 335],
    [1408, 339], [1417, 344], [1425, 348], [1439, 351], [1456, 357],
]

function ParcelMap() {
    return (
        <svg viewBox="63 165 1817 730" preserveAspectRatio="xMinYMin meet" className="absolute inset-0 h-full w-full" fill="none" shapeRendering="crispEdges" role="img" aria-label="Mapa de parcelas">
            <path d="M1260 713 1268 710 1283 763 1275 766Z" fill="#0f0" stroke="#0f0" strokeWidth={13} strokeLinejoin="round" />
            <path d="M1259 713 1267 710 1284 763 1275 765Z" stroke="#b06a3c" />
            {sheets.map(({ grid, lines }) => (
                <g key={grid} transform={grid}>
                    <path d={lines} stroke="#ff2d96" vectorEffect="non-scaling-stroke" />
                </g>
            ))}
            <g transform={sheets[0].grid}>
                <path d="M230 616 275 621 330 618 347 625 290 747 236 731 188 714 169 679Z" stroke="#0090e0" vectorEffect="non-scaling-stroke" />
            </g>
            {landmarks.map(([x, y]) => (
                <g key={`${x}-${y}`}>
                    <path d={`M${x - 3} ${y + 3}h6`} stroke="#e8c84a" />
                    <path d={`M${x - 3} ${y + 2}h6M${x} ${y}v3`} stroke="#e0004a" />
                    <path d={`M${x - 5} ${y}h10`} stroke="#001c3a" strokeWidth={1} />
                </g>
            ))}
            <path d="M66 178.5H225M98.5 168V305M90.5 170.5h16v16h-16Z" stroke="#000" />
        </svg>
    )
}

/**
 * PARCEL DIALOG
 */
const parcels = [
    { name: "ÍTI Ã PAUL", code: "ffa79960-fe75-4b6b-a296-8852c4f10475" },
    { name: "FA ANT ANTNI  GLEBA A2", code: "f5598fb6-1313-44c3-ae83-1c20e4baa4f0" },
    { name: "ESTANCIA NOSSA SENHORA APARECIDA", code: "936056ad-0dac-4881-85f4-19ec0f28bcac" },
    { name: "ITI ÁGUIA ? GLEBA B", code: "a2d971f7-b660-446a-821e-9050f4255a8c" },
    { name: "ÍTI Ã JÃ D CAVALHEIR", code: "7236930c-b65a-4995-b1c8-f8935fa30b6b" },
    { name: "UM QUINHÃ DE TERRA", code: "7319c140-a32d-421d-9f32-d82e441cb3b8" },
    { name: "II A JUDA ADEU", code: "1c1b7963-7c70-4f93-8bf6-7221cbfc84e1" },
    { name: "FAENDA Ã PEDR", code: "407bef9b-e4ac-4e74-8fe4-10b87c49cac1" },
    { name: "ETANCIA D CAJU", code: "87245f43-8e64-4f0a-87c3-fa332cb4ef99" },
    { name: "ITI VARGINHA", code: "edaec41b-52f0-4479-b141-e14816645fc4" },
]

function ParcelTable() {
    return (
        <table className="w-[752px] shrink-0 table-fixed border-separate border-spacing-0 text-sm leading-5">
            <thead className="bg-[#f0f0f0] text-[15px]">
                <tr className="h-[30px]">
                    <th className="w-[64px] border-r border-b border-[#808080] p-0 pb-1">Ind</th>
                    <th className="w-[343px] border-r border-b border-[#808080] p-0 pb-1">Parcela</th>
                    <th className="w-[313px] border-r border-b border-[#808080] p-0 pb-1">Código Parcela</th>
                    <th className="border-r border-b border-[#808080] p-0" aria-label="Texto" />
                </tr>
            </thead>
            <tbody>
                {parcels.map(({ name, code }, idx) => (
                    <tr key={code} className={clsx('h-[30px]', idx === 0 ? 'bg-[#0078d7] text-white' : 'bg-white')}>
                        <th className="border-r border-b border-[#808080] bg-[#f0f0f0] p-0 pb-1 text-[15px] text-black">{idx + 1}</th>
                        <td className={clsx('border-r border-b border-[#c0c0c0] p-0 px-[3px] pb-1 text-[15px] whitespace-pre', idx === 0 && 'outline-1 -outline-offset-1 outline-dotted outline-[#ff8728]')}>{name}</td>
                        <td className="border-r border-b border-[#c0c0c0] p-0 px-[3px] pb-1 whitespace-nowrap">{code}</td>
                        <td className="border-r border-b border-[#808080] bg-[#f0f0f0] p-px">
                            <button className="flex h-[27px] w-full items-center justify-center border border-[#a0a0a0] bg-white" aria-label={`Texto da parcela ${idx + 1}`}>
                                <Icon className="size-6">{drawIcons.Texto}</Icon>
                            </button>
                        </td>
                    </tr>
                ))}
            </tbody>
        </table>
    )
}

function Scrollbar() {
    return (
        <div className="flex flex-1 flex-col items-center bg-[#e8e8e8] py-2">
            <svg viewBox="0 0 8 5" className="h-[5px] w-2 fill-[#606060]"><path d="m4 0 4 5H0Z" /></svg>
            <span className="mt-1 h-px w-3 bg-[#606060]" />
            <span className="mt-0.5 h-4 w-[15px] bg-linear-to-r from-[#606060] to-[#8a8a8a]" />
            <span className="mt-auto h-px w-3 bg-[#606060]" />
            <svg viewBox="0 0 8 5" className="mt-1.5 h-[5px] w-2 fill-[#606060]"><path d="m4 5 4-5H0Z" /></svg>
        </div>
    )
}

function ParcelDialog() {
    const button = "h-[35px] shrink-0 border leading-5"
    const plain = "border-[#adadad] bg-[#f0f0f0] text-[15px]"
    const pressed = "border-[#adadad] bg-[#e1e1e1] text-[15px]"
    return (
        <section role="dialog" aria-label="Parcelas importadas" className="absolute top-[278px] left-[565px] flex w-[783px] flex-col bg-[#17304b] px-[5px] pb-[5px]">
            <header className="flex h-[38px] items-center pl-1.5 text-white">
                <h1 className="flex-1 font-[Roboto,sans-serif] text-xs">Parcelas importadas - Geo Confrontante</h1>
                <div className="mr-[91px] flex items-center gap-0.5 font-[Lato,sans-serif] text-[13px] font-black">
                    <svg viewBox="0 0 24 26" className="h-6 w-[22px]" aria-hidden="true">
                        <path d="m12 1 10 6v12l-10 6-10-6V7Z" fill="#fff" />
                        <path d="m9 6 4 2 5-3M6 10l7 4 8-4M6 15l7 4 8-4M5 19l8 4 8-4" fill="none" stroke="#17304b" strokeWidth={1.8} />
                    </svg>
                    TOPO
                </div>
                <button aria-label="Fechar" className="mr-[17px]">
                    <svg viewBox="0 0 10 10" className="size-2.5" stroke="#fff"><path d="m0 0 10 10M10 0 0 10" /></svg>
                </button>
            </header>
            <div className="flex flex-col bg-[#fafafa]">
                <div className="flex border border-[#d0d0d0] bg-[#f0f0f0] p-px">
                    <ParcelTable />
                    <Scrollbar />
                </div>
                <footer className="flex items-start pt-2.5 pr-[5px] pb-2 pl-[3px]">
                    <button className={clsx(button, 'flex w-[249px] items-center gap-1.5 border-[#adadad] bg-[#f0f0f0] pl-2.5 text-sm whitespace-nowrap')}>
                        <Icon className="size-6">
                            <path d="M0 0h24v12H0Z" fill={CORAL} stroke="none" />
                            <path d="M0 9c6 0 8-5 24-6v21H0Z" fill={SAND} stroke="none" />
                            <path d="M24 18c-6 0-8 4-16 6h16Z" fill={NAVY} stroke="none" />
                            <Letter x={12} y={16} size={8}>SIGEF</Letter>
                        </Icon>
                        Importar dados da certificação
                    </button>
                    <button disabled className={clsx(button, 'ml-auto w-[85px] border-[#8c8c8c] bg-[#c6c6c6] text-[15px] text-[#a0a0a0]')}>Restaurar</button>
                    <button className={clsx(button, plain, 'ml-[7px] w-[85px]')}>Info</button>
                    <button className={clsx(button, pressed, 'ml-[7px] w-[67px]')}>Excluir</button>
                    <button className={clsx(button, pressed, 'ml-0.5 flex w-[14px] items-center justify-center')} aria-label="Opções de exclusão">
                        <svg viewBox="0 0 6 7" className="h-[7px] w-1.5"><path d="M0 0h6v2L3 7 0 2Z" /></svg>
                    </button>
                    <button className={clsx(button, plain, 'ml-[7px] w-[85px]')}>Tutorial</button>
                    <button className={clsx(button, plain, 'ml-[6px] w-[85px]')}><u>S</u>air</button>
                </footer>
            </div>
        </section>
    )
}

/**
 * STATUS BAR AND CONSOLE
 */
const toggles = [
    { label: "Ortho - F8", width: "w-[73px]" },
    { label: "Osnap - F3", width: "w-[72px]" },
    { label: "Atrib - F4", width: "w-[72px]", on: true },
    { label: "SGrip - F5", width: "w-[72px]" },
    { label: "Grid - F7", width: "w-[72px]" },
    { label: "Snap - F9", width: "w-[72px]" },
    { label: "RTexto - F10", width: "w-[81px]" },
    { label: "Nome - F11", width: "w-[74px]" },
    { label: "Filtro - F12", width: "w-[72px]" },
    { label: "Snap Pto", width: "w-[72px]" },
    { label: "Snap 3D", width: "w-[72px]" },
    { label: "Georref.", width: "w-[63px]" },
]

function StatusBar() {
    return (
        <section className="flex h-[24px] border-t border-b border-t-white border-b-[#9a9a9a] bg-[#fafafa] text-[13px]">
            <output className="w-[216px] shrink-0 border-r border-[#a0a0a0] bg-[#f0f0f0] text-xs leading-5">249714.18252 , 7564882.58946</output>
            {toggles.map(({ label, width, on }) => (
                <button
                    key={label}
                    aria-pressed={!!on}
                    className={clsx(
                        'shrink-0 border-r leading-4 whitespace-nowrap',
                        width,
                        on ? 'border-t border-l border-t-[#606060] border-r-white border-l-[#606060] bg-[#e8ffd8] text-[#0068c0]' : 'border-[#a0a0a0] bg-[#f0f0f0] text-[#808080]'
                    )}
                >
                    {label}
                </button>
            ))}
        </section>
    )
}

function Console() {
    return (
        <section className="flex h-[60px] shrink-0 overflow-hidden bg-white">
            <div className="flex-1 pt-[3px] text-sm leading-5 whitespace-nowrap">
                <p>Área: 387171.49661 m² ou 38.71715 ha ou 15.99882 Alqs, Perímetro: 3841.25784 m</p>
                <p>Comando: Parcelas importadas</p>
                <p><b className="bg-[#fafafa] text-[#17304b]">Continuando comando Parcelas importadas...</b></p>
            </div>
            <div className="mt-px flex h-[42px] w-2 flex-col bg-[#e4e4e4] pt-[9px] pl-px">
                <span className="h-[15px] bg-[#808080]" />
                <span className="mt-px ml-0.5 h-px bg-[#606060]" />
                <svg viewBox="0 0 4 4" className="mt-1.5 ml-auto size-1 fill-[#606060]"><path d="M0 0h4v4Z" /></svg>
            </div>
        </section>
    )
}

export default function App() {
    return (
        <div className="relative flex h-screen flex-col overflow-hidden bg-white font-['DejaVu_Sans_Condensed','Noto_Sans',sans-serif] text-black">
            <MenuTabs />
            <Ribbon />
            <Toolbar />
            <main className="flex min-h-0 flex-1 bg-[#ebebeb]">
                <aside className="flex w-[62px] shrink-0 gap-1 pt-0.5">
                    <ToolColumn icons={drawIcons} className="w-6" shift="-ml-[3px]" />
                    <ToolColumn icons={editIcons} className="w-[32px]" shift="ml-1" />
                </aside>
                <div className="flex min-w-0 flex-1 flex-col">
                    <div className="relative min-h-0 flex-1 border-x border-b border-[#d9d9d9] bg-white">
                        <ParcelMap />
                    </div>
                    <div className="flex h-[24px] bg-[#fafafa] text-[13px]">
                        <button className="w-[67px] border-r border-[#d9d9d9] bg-white font-bold">C A D</button>
                        <button className="w-[78px] border-r border-[#d9d9d9] bg-[#f0f0f0]">RASTER</button>
                    </div>
                </div>
                <aside className="w-[27px] shrink-0 overflow-hidden pt-0.5 pl-[3px]">
                    <ToolColumn icons={snapIcons} className="w-[32px]" shift="ml-1" />
                </aside>
            </main>
            <StatusBar />
            <Console />
            <ParcelDialog />
            <svg viewBox="0 0 12 20" className="absolute top-[521px] left-[794px] h-5 w-3" aria-hidden="true">
                <path d="M.5.5v16l4-4 3 7 2-1-3-6h5Z" fill="#fff" stroke="#000" />
            </svg>
        </div>
    )
}
